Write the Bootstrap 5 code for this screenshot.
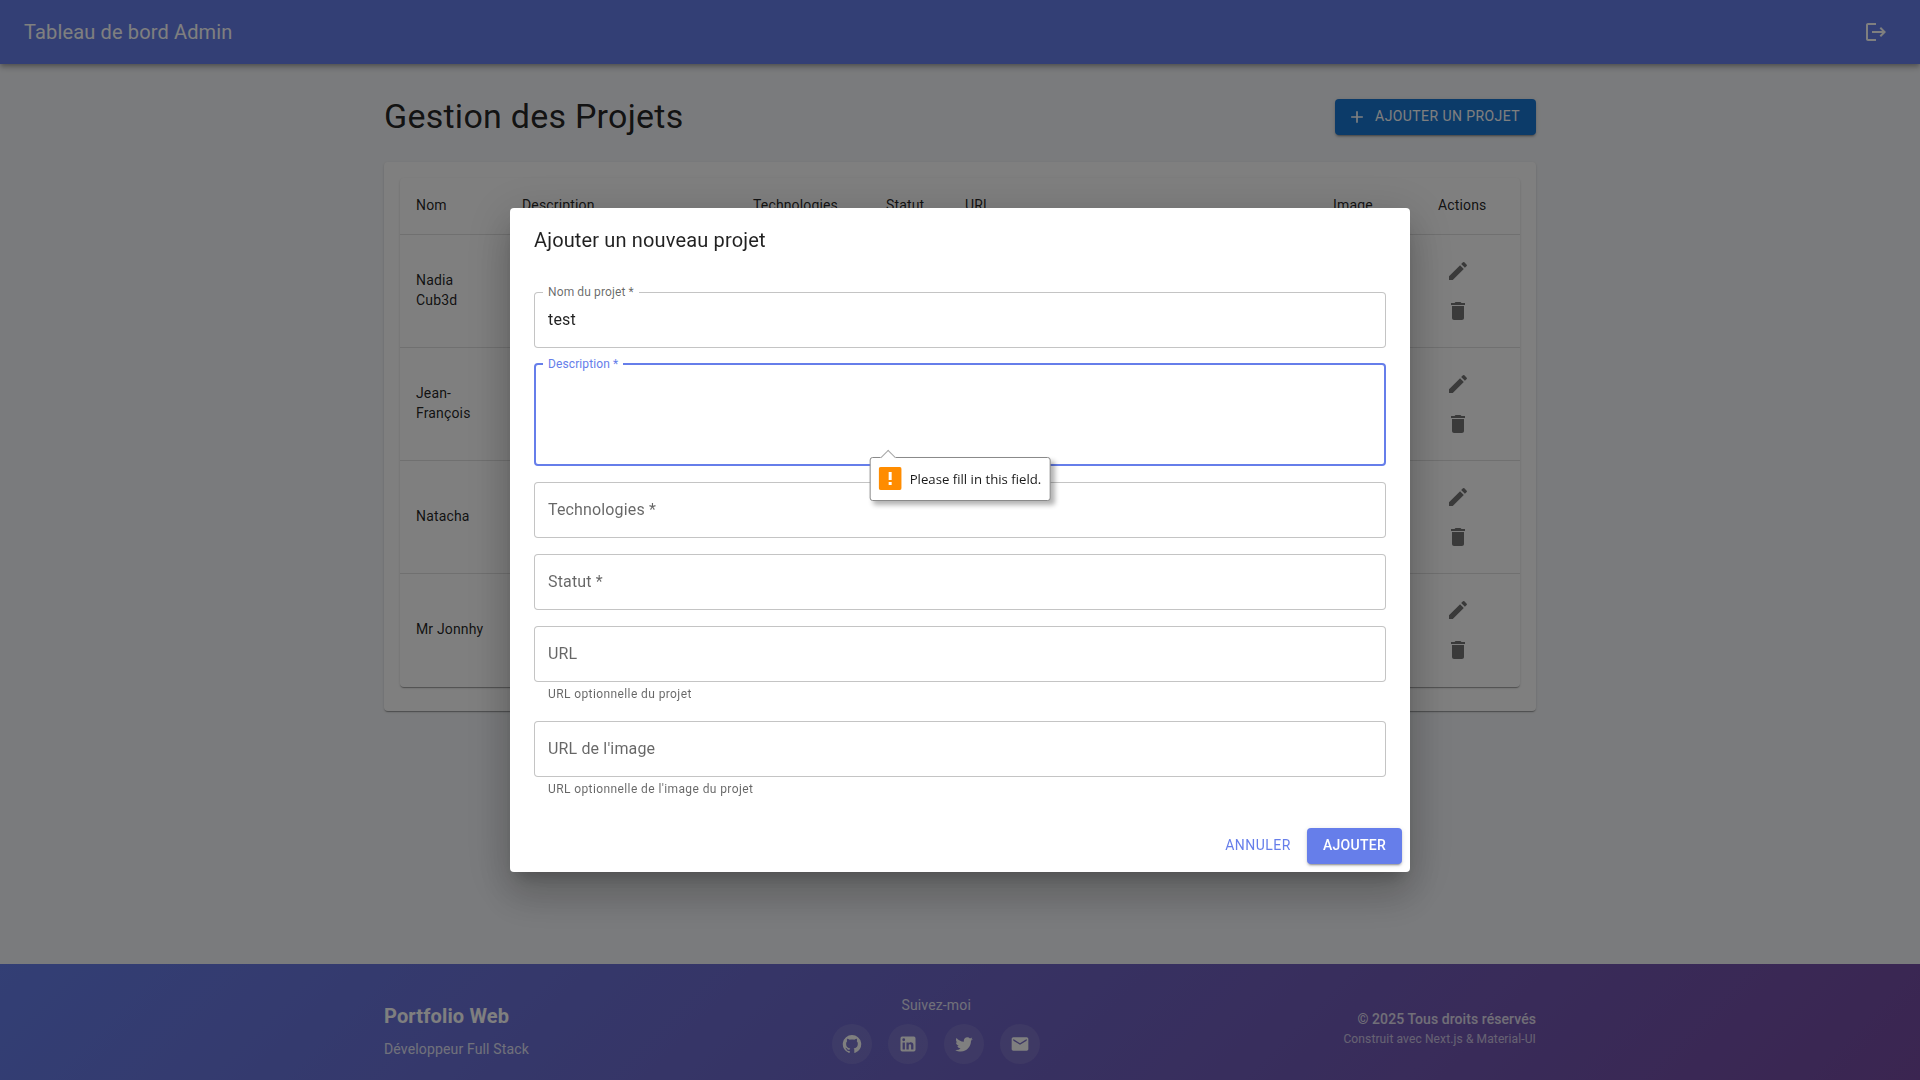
<!DOCTYPE html>
<html lang="fr">

<head>
    <meta charset="UTF-8">
    <meta name="viewport" content="width=device-width, initial-scale=1.0">
    <title>Tableau de bord Admin</title>
    <link href="https://cdn.jsdelivr.net/npm/bootstrap@5.3.0/dist/css/bootstrap.min.css" rel="stylesheet">
    <style>
        body {
            font-family: Roboto, "Liberation Sans", sans-serif;
            background: #f5f7fa;
            color: rgba(0, 0, 0, .87);
        }

        .admin-bar {
            height: 64px;
            padding: 0 24px;
            background: #667eea;
            box-shadow: 0 2px 4px -1px rgba(0, 0, 0, .2), 0 4px 5px 0 rgba(0, 0, 0, .14), 0 1px 10px 0 rgba(0, 0, 0, .12);
        }

        .admin-bar .navbar-brand {
            margin: 0;
            padding: 0;
            color: #fff;
            font-size: 20px;
            font-weight: 400;
            letter-spacing: .0075em;
        }

        .logout-btn {
            display: flex;
            padding: 8px;
            border: 0;
            background: none;
            color: #fff;
        }

        .page-wrap {
            width: 1152px;
            margin: 0 auto;
        }

        .page-head {
            padding-top: 32px;
            margin-bottom: 24px;
        }

        .page-title {
            margin: 0;
            padding-bottom: 2px;
            font-size: 34px;
            font-weight: 400;
            line-height: 40px;
            letter-spacing: .00735em;
        }

        .add-btn {
            display: flex;
            align-items: center;
            height: 36px;
            padding: 5px 16px 7px 12px;
            border: 0;
            border-radius: 4px;
            background: #1976d2;
            color: #fff;
            font-size: 14px;
            font-weight: 400;
            letter-spacing: .03em;
            box-shadow: 0 3px 1px -2px rgba(0, 0, 0, .2), 0 2px 2px 0 rgba(0, 0, 0, .14), 0 1px 5px 0 rgba(0, 0, 0, .12);
        }

        .add-btn svg {
            margin-top: 2px;
            margin-right: 8px;
        }

        .outer-paper {
            padding: 16px 16px 24px;
            border-radius: 4px;
            background: #fff;
            box-shadow: 0 2px 1px -1px rgba(0, 0, 0, .2), 0 1px 1px 0 rgba(0, 0, 0, .14), 0 1px 3px 0 rgba(0, 0, 0, .12);
        }

        .table-paper {
            border-radius: 4px;
            overflow: hidden;
            background: #fff;
            box-shadow: 0 2px 1px -1px rgba(0, 0, 0, .2), 0 1px 1px 0 rgba(0, 0, 0, .14), 0 1px 3px 0 rgba(0, 0, 0, .12);
        }

        .projects-table {
            table-layout: fixed;
            width: 1120px;
            --bs-table-bg: transparent;
        }

        .projects-table col:nth-child(1) { width: 106px; }
        .projects-table col:nth-child(2) { width: 231px; }
        .projects-table col:nth-child(3) { width: 133px; }
        .projects-table col:nth-child(4) { width: 79px; }
        .projects-table col:nth-child(5) { width: 368px; }
        .projects-table col:nth-child(6) { width: 105px; }
        .projects-table col:nth-child(7) { width: 98px; }

        .projects-table th,
        .projects-table td {
            padding: 16px;
            border-bottom: 1px solid #e0e0e0;
            color: rgba(0, 0, 0, .87);
            font-size: 14px;
            letter-spacing: .01071em;
            vertical-align: middle;
        }

        .projects-table th {
            padding: 15px 16px 17px;
            font-weight: 400;
            line-height: 24px;
        }

        .projects-table td {
            padding-bottom: 18px;
            line-height: 20px;
        }

        .projects-table td:last-child {
            padding-bottom: 16px;
        }

        .projects-table tbody tr:last-child td {
            border-bottom-color: transparent;
        }

        .row-action {
            display: flex;
            padding: 8px;
            border: 0;
            background: none;
            color: rgba(0, 0, 0, .54);
        }

        .site-footer {
            padding: 31px 0 16px;
            background: linear-gradient(135deg, #667eea 0%, #764ba2 100%);
            color: #fff;
        }

        .footer-name {
            margin: 0 0 7px;
            font-size: 20px;
            font-weight: 700;
            line-height: 32px;
            letter-spacing: .0075em;
        }

        .footer-sub {
            margin: 0;
            font-size: 14px;
            line-height: 21px;
            letter-spacing: .01071em;
            opacity: .8;
        }

        .footer-follow {
            margin: 0 0 8px;
            font-size: 14px;
            line-height: 21px;
            letter-spacing: .01071em;
            opacity: .8;
        }

        .social-link {
            display: flex;
            align-items: center;
            justify-content: center;
            width: 40px;
            height: 40px;
            border-radius: 50%;
            background: rgba(255, 255, 255, .1);
            color: #fff;
        }

        .footer-meta {
            padding-bottom: 2px;
        }

        .footer-copy {
            margin: 0;
            font-size: 14px;
            font-weight: 500;
            line-height: 21px;
            letter-spacing: .005em;
            opacity: .8;
        }

        .footer-built {
            margin: 0;
            font-size: 12px;
            line-height: 18px;
            letter-spacing: .01em;
            opacity: .65;
        }

        .project-dialog {
            max-width: 900px;
        }

        .project-dialog .modal-content {
            border: 0;
            border-radius: 4px;
            box-shadow: 0 11px 15px -7px rgba(0, 0, 0, .2), 0 24px 38px 3px rgba(0, 0, 0, .14), 0 9px 46px 8px rgba(0, 0, 0, .12);
        }

        .project-dialog .modal-header {
            padding: 16px 24px;
            border: 0;
        }

        .project-dialog .modal-title {
            font-size: 20px;
            font-weight: 400;
            line-height: 32px;
            letter-spacing: .0075em;
        }

        .project-dialog .modal-body {
            padding: 20px 24px 4px;
        }

        .project-dialog .modal-footer {
            gap: 8px;
            padding: 8px;
            border: 0;
        }

        .project-dialog .modal-footer > * {
            margin: 0;
        }

        .out-field {
            margin-bottom: 16px;
        }

        .out-field .form-control {
            height: 56px;
            padding: 15px 13px 17px;
            border: 1px solid rgba(0, 0, 0, .23);
            border-radius: 4px;
            color: rgba(0, 0, 0, .87);
            font-size: 16px;
            line-height: 23px;
            letter-spacing: .00938em;
        }

        .out-field .form-control::placeholder {
            color: rgba(0, 0, 0, .6);
            opacity: 1;
        }

        .out-field textarea.form-control {
            height: 103px;
            margin-top: -1px;
            resize: none;
        }

        .out-field .field-active {
            border: 2px solid #667eea;
            box-shadow: none;
        }

        .out-label {
            position: absolute;
            top: -9px;
            left: 9px;
            margin: 0;
            padding: 0 5px;
            background: #fff;
            color: rgba(0, 0, 0, .6);
            font-size: 12px;
            line-height: 18px;
            letter-spacing: .00938em;
        }

        .out-label.label-active {
            top: -8px;
            color: #667eea;
        }

        .field-help {
            margin: 2px 14px 0;
            padding-bottom: 1px;
            color: rgba(0, 0, 0, .6);
            font-size: 12px;
            line-height: 20px;
            letter-spacing: .03333em;
        }

        .cancel-btn,
        .submit-btn {
            height: 36px;
            border: 0;
            border-radius: 4px;
            font-size: 14px;
        }

        .cancel-btn {
            padding: 5px 8px 7px;
            background: none;
            color: #667eea;
            font-weight: 400;
            letter-spacing: .035em;
        }

        .submit-btn {
            padding: 5px 16px 7px;
            background: #667eea;
            color: #fff;
            font-weight: 500;
            letter-spacing: .02em;
            box-shadow: 0 3px 1px -2px rgba(0, 0, 0, .2), 0 2px 2px 0 rgba(0, 0, 0, .14), 0 1px 5px 0 rgba(0, 0, 0, .12);
        }

        /* native validation bubble */
        .fill-bubble {
            position: absolute;
            top: 94px;
            left: 50%;
            z-index: 2;
            display: flex;
            align-items: center;
            gap: 8px;
            height: 44px;
            padding: 1px 8px 0;
            transform: translateX(-50%);
            border: 1px solid #8a8a8a;
            border-radius: 3px;
            background: #fff;
            color: #1a1a1a;
            font-family: "Open Sans", "Noto Sans", sans-serif;
            font-size: 13.2px;
            white-space: nowrap;
            box-shadow: 4px 4px 5px rgba(0, 0, 0, .3);
        }

        .fill-bubble::before {
            content: "";
            position: absolute;
            top: -6px;
            left: 12px;
            width: 11px;
            height: 11px;
            transform: rotate(45deg);
            border-top: 1px solid #a8a8a8;
            border-left: 1px solid #a8a8a8;
            background: #fff;
        }

        .bubble-icon {
            display: flex;
            flex: none;
            width: 23px;
            height: 23px;
            margin-top: -3px;
            border-radius: 2px;
        }
    </style>
</head>

<body class="d-flex flex-column min-vh-100 overflow-hidden">
    <!-- Navbar -->
    <nav class="navbar admin-bar justify-content-between flex-nowrap">
        <a class="navbar-brand" href="#">Tableau de bord Admin</a>
        <button class="logout-btn" type="button" aria-label="Déconnexion">
            <svg width="24" height="24" viewBox="0 0 24 24" fill="currentColor"><path d="M17 7l-1.41 1.41L18.17 11H8v2h10.17l-2.58 2.58L17 17l5-5zM4 5h8V3H4c-1.1 0-2 .9-2 2v14c0 1.1.9 2 2 2h8v-2H4V5z"/></svg>
        </button>
    </nav>

    <!-- Main Container -->
    <main class="page-wrap">
        <div class="page-head d-flex justify-content-between align-items-center">
            <h1 class="page-title">Gestion des Projets</h1>
            <button class="add-btn" type="button">
                <svg width="20" height="20" viewBox="0 0 24 24" fill="currentColor"><path d="M19 13h-6v6h-2v-6H5v-2h6V5h2v6h6v2z"/></svg>
                AJOUTER UN PROJET
            </button>
        </div>

        <div class="outer-paper">
            <div class="table-paper">
                <table class="table projects-table mb-0">
                    <colgroup><col><col><col><col><col><col><col></colgroup>
                    <thead>
                        <tr>
                            <th>Nom</th>
                            <th>Description</th>
                            <th>Technologies</th>
                            <th>Statut</th>
                            <th>URL</th>
                            <th>Image</th>
                            <th>Actions</th>
                        </tr>
                    </thead>
                    <tbody id="projectRows"></tbody>
                </table>
            </div>
        </div>
    </main>

    <!-- Footer -->
    <footer class="site-footer mt-auto">
        <div class="page-wrap d-flex justify-content-between align-items-center">
            <div>
                <p class="footer-name">Portfolio Web</p>
                <p class="footer-sub">Développeur Full Stack</p>
            </div>
            <div class="text-center">
                <p class="footer-follow">Suivez-moi</p>
                <div class="d-flex gap-3">
                    <a class="social-link" href="#" aria-label="GitHub"><svg width="20" height="20" viewBox="0 0 24 24" fill="currentColor"><path d="M12 1.27a11 11 0 00-3.48 21.46c.55.09.73-.28.73-.55v-1.84c-3.03.64-3.67-1.46-3.67-1.46-.55-1.29-1.28-1.65-1.28-1.65-.92-.65.1-.65.1-.65 1.1 0 1.73 1.1 1.73 1.1.92 1.65 2.57 1.2 3.21.92a2 2 0 01.64-1.47c-2.47-.27-5.04-1.19-5.04-5.5 0-1.1.46-2.1 1.2-2.84a3.76 3.76 0 010-2.93s.91-.28 3.11 1.1c1.8-.49 3.7-.49 5.5 0 2.1-1.38 3.02-1.1 3.02-1.1a3.76 3.76 0 010 2.93c.83.74 1.2 1.74 1.2 2.94 0 4.21-2.57 5.13-5.04 5.4.45.37.82.92.82 2.02v3.03c0 .27.1.64.73.55A11 11 0 0012 1.27"/></svg></a>
                    <a class="social-link" href="#" aria-label="LinkedIn"><svg width="20" height="20" viewBox="0 0 24 24" fill="currentColor"><path d="M19 3a2 2 0 0 1 2 2v14a2 2 0 0 1-2 2H5a2 2 0 0 1-2-2V5a2 2 0 0 1 2-2h14m-.5 15.5v-5.3a3.26 3.26 0 0 0-3.26-3.26c-.85 0-1.84.52-2.32 1.3v-1.11h-2.79v8.37h2.79v-4.93c0-.77.62-1.4 1.39-1.4a1.4 1.4 0 0 1 1.4 1.4v4.93h2.79M6.88 8.56a1.68 1.68 0 0 0 1.68-1.68c0-.93-.75-1.69-1.68-1.69a1.69 1.69 0 0 0-1.69 1.69c0 .93.76 1.68 1.69 1.68m1.39 9.94v-8.37H5.5v8.37h2.77z"/></svg></a>
                    <a class="social-link" href="#" aria-label="Twitter"><svg width="20" height="20" viewBox="0 0 24 24" fill="currentColor"><path d="M22.46 6c-.77.35-1.6.58-2.46.69.88-.53 1.56-1.37 1.88-2.38-.83.5-1.75.85-2.72 1.05C18.37 4.5 17.26 4 16 4c-2.35 0-4.27 1.92-4.27 4.29 0 .34.04.67.11.98C8.28 9.09 5.11 7.38 3 4.79c-.37.63-.58 1.37-.58 2.15 0 1.49.75 2.81 1.91 3.56-.71 0-1.37-.2-1.95-.5v.03c0 2.08 1.48 3.82 3.44 4.21a4.22 4.22 0 0 1-1.93.07 4.28 4.28 0 0 0 4 2.98 8.521 8.521 0 0 1-5.33 1.84c-.34 0-.68-.02-1.02-.06C3.44 20.29 5.7 21 8.12 21 16 21 20.33 14.46 20.33 8.79c0-.19 0-.37-.01-.56.84-.6 1.56-1.36 2.14-2.23z"/></svg></a>
                    <a class="social-link" href="#" aria-label="Email"><svg width="20" height="20" viewBox="0 0 24 24" fill="currentColor"><path d="M20 4H4c-1.1 0-1.99.9-1.99 2L2 18c0 1.1.9 2 2 2h16c1.1 0 2-.9 2-2V6c0-1.1-.9-2-2-2zm0 4l-8 5-8-5V6l8 5 8-5v2z"/></svg></a>
                </div>
            </div>
            <div class="text-end footer-meta">
                <p class="footer-copy">© 2025 Tous droits réservés</p>
                <p class="footer-built">Construit avec Next.js &amp; Material-UI</p>
            </div>
        </div>
    </footer>

    <!-- Add project modal -->
    <div class="modal-backdrop show"></div>
    <div class="modal d-block" tabindex="-1" aria-labelledby="projectModalLabel">
        <div class="modal-dialog modal-dialog-centered project-dialog">
            <div class="modal-content">
                <div class="modal-header">
                    <h2 class="modal-title" id="projectModalLabel">Ajouter un nouveau projet</h2>
                </div>
                <div class="modal-body">
                    <form id="projectForm">
                        <div class="out-field position-relative">
                            <label class="out-label" for="projectName">Nom du projet *</label>
                            <input type="text" class="form-control" id="projectName" value="test" required>
                        </div>
                        <div class="out-field position-relative">
                            <label class="out-label label-active" for="projectDescription">Description *</label>
                            <textarea class="form-control field-active" id="projectDescription" required></textarea>
                            <div class="fill-bubble">
                                <span class="bubble-icon">
                                    <svg width="23" height="23" viewBox="0 0 23 23"><rect width="23" height="23" rx="2" fill="#ff8c00"/><rect x="10" y="5" width="3" height="8" fill="#fff"/><rect x="10" y="15" width="3" height="3" fill="#fff"/></svg>
                                </span>
                                Please fill in this field.
                            </div>
                        </div>
                        <div class="out-field">
                            <input type="text" class="form-control" placeholder="Technologies *" aria-label="Technologies">
                        </div>
                        <div class="out-field">
                            <input type="text" class="form-control" placeholder="Statut *" aria-label="Statut">
                        </div>
                        <div class="out-field">
                            <input type="text" class="form-control" placeholder="URL" aria-label="URL">
                            <p class="field-help mb-0">URL optionnelle du projet</p>
                        </div>
                        <div class="out-field">
                            <input type="text" class="form-control" placeholder="URL de l'image" aria-label="URL de l'image">
                            <p class="field-help mb-0">URL optionnelle de l'image du projet</p>
                        </div>
                    </form>
                </div>
                <div class="modal-footer">
                    <button type="button" class="cancel-btn">ANNULER</button>
                    <button type="submit" form="projectForm" class="submit-btn">AJOUTER</button>
                </div>
            </div>
        </div>
    </div>

    <script>
        // rows behind the dialog, only names and actions show
        const projectNames = ["Nadia Cub3d", "Jean-François", "Natacha", "Mr Jonnhy"];
        const tableBody = document.getElementById("projectRows");

        projectNames.forEach((name) => {
            let row = document.createElement("tr");
            row.innerHTML = `
                <td>${name}</td>
                <td></td><td></td><td></td><td></td><td></td>
                <td>
                    <button class="row-action" type="button" aria-label="Modifier"><svg width="24" height="24" viewBox="0 0 24 24" fill="currentColor"><path d="M3 17.25V21h3.75L17.81 9.94l-3.75-3.75L3 17.25zM20.71 7.04c.39-.39.39-1.02 0-1.41l-2.34-2.34a.9959.9959 0 0 0-1.41 0l-1.83 1.83 3.75 3.75 1.83-1.83z"/></svg></button>
                    <button class="row-action" type="button" aria-label="Supprimer"><svg width="24" height="24" viewBox="0 0 24 24" fill="currentColor"><path d="M6 19c0 1.1.9 2 2 2h8c1.1 0 2-.9 2-2V7H6v12zM19 4h-3.5l-1-1h-5l-1 1H5v2h14V4z"/></svg></button>
                </td>
            `;
            tableBody.appendChild(row);
        });
    </script>

    <script src="https://cdn.jsdelivr.net/npm/bootstrap@5.3.0/dist/js/bootstrap.bundle.min.js"></script>
</body>

</html>
